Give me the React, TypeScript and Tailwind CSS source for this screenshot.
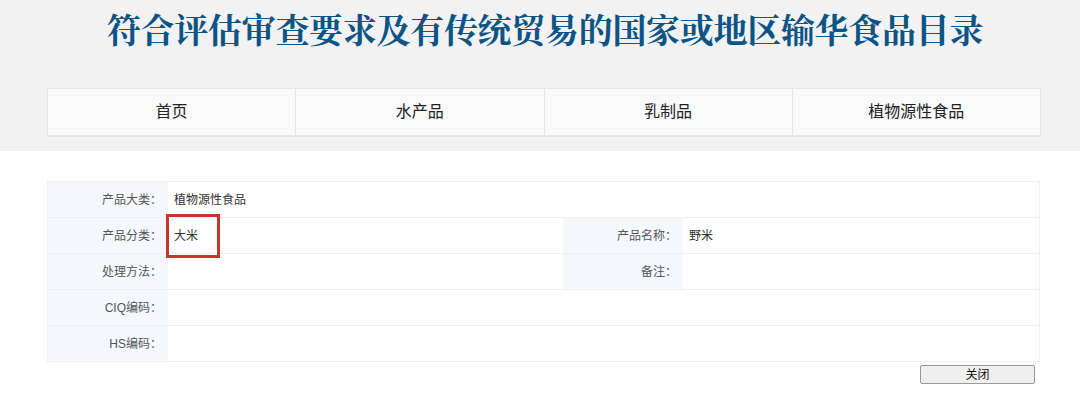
import React from "react";

const sans = "font-['Liberation_Sans','Noto_Sans_CJK_SC',sans-serif]";

function Label({ children }: { children?: React.ReactNode }) {
  return (
    <div className="flex h-[35px] items-center justify-end bg-[#f4f8fc] pr-[6px] text-[12px] text-[#555]">
      {children}
    </div>
  );
}

function Value({ children, span }: { children?: React.ReactNode; span?: boolean }) {
  return (
    <div
      className={
        "flex h-[35px] items-center bg-white pl-[6px] text-[12px] text-[#333] " +
        (span ? "col-span-3" : "")
      }
    >
      {children}
    </div>
  );
}

export default function App() {
  const nav = ["首页", "水产品", "乳制品", "植物源性食品"];
  return (
    <div className={"h-[409px] w-[1080px] overflow-hidden bg-white " + sans}>
      <div className="h-[151px] bg-[#f2f2f2] pt-[8px]">
        <h1 className="pl-[10px] text-center font-['Noto_Serif_CJK_SC','Noto_Sans_CJK_SC',serif] text-[34px] font-bold leading-[42px] tracking-[-0.3px] text-[#0d5486]">
          符合评估审查要求及有传统贸易的国家或地区输华食品目录
        </h1>
        <div className="ml-[47px] mt-[38px] flex h-[49px] w-[994px] border-x-[1.5px] border-t-[1.5px] border-b-[2px] border-[#e3e3e3] bg-[#f9f9f9]">
          {nav.map((n, i) => (
            <div
              key={n}
              className={
                "flex flex-1 items-center justify-center text-[16px] text-[#222] " +
                (i > 0 ? "border-l-[1.5px] border-[#e3e3e3]" : "")
              }
            >
              {n}
            </div>
          ))}
        </div>
      </div>

      <div className="ml-[47px] mt-[30px] w-[993px]">
        <div className="grid grid-cols-[120px_395px_120px_1fr] gap-y-[1px] border border-[#f0f0f0] bg-[#f0f0f0]">
          <Label>产品大类：</Label>
          <Value span>植物源性食品</Value>

          <Label>产品分类：</Label>
          <div className="relative flex h-[35px] items-center bg-white pl-[6px] text-[12px] text-[#333]">
            大米
            <div className="pointer-events-none absolute left-[-2px] top-[-4px] h-[44px] w-[54px] border-[3px] border-[#c8352b]" />
          </div>
          <Label>产品名称：</Label>
          <Value>野米</Value>

          <Label>处理方法：</Label>
          <Value />
          <Label>备注：</Label>
          <Value />

          <Label>CIQ编码：</Label>
          <Value span />

          <Label>HS编码：</Label>
          <Value span />
        </div>
        <div className="mt-[3px] flex justify-end pr-[5px]">
          <button className="flex h-[19px] w-[115px] items-center justify-center rounded-[2px] border border-[#999] bg-[#efefef] text-[12px] text-[#111]">
            关闭
          </button>
        </div>
      </div>
    </div>
  );
}
